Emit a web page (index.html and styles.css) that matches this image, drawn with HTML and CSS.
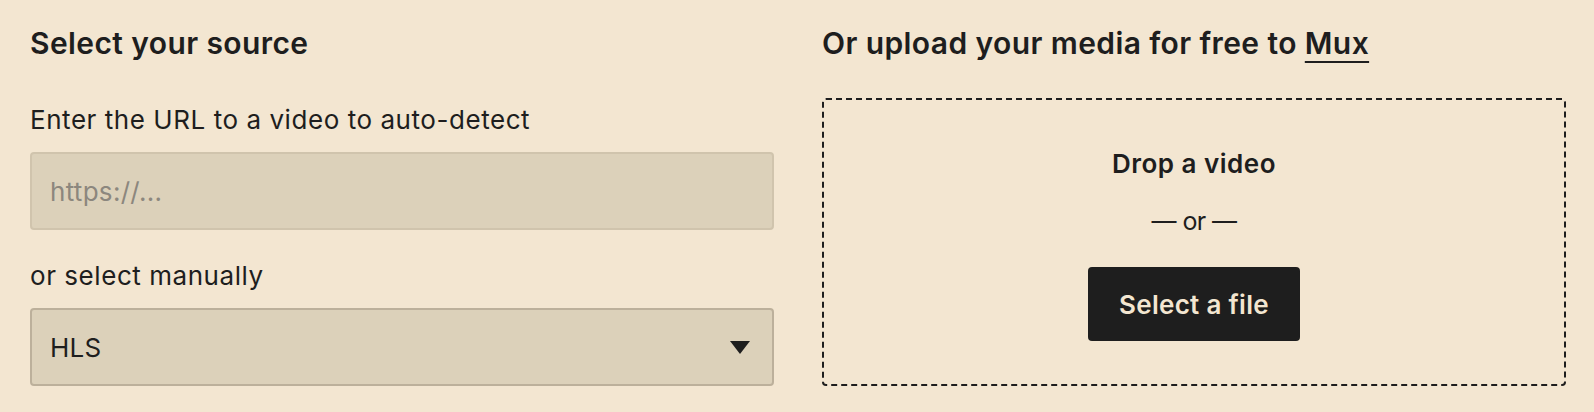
FILE: index.html
```html
<!DOCTYPE html>
<html>
<head>
  <meta charset="UTF-8">
  <title>Select your source</title>
  <link rel="stylesheet" href="styles.css">
</head>
<body>
  <div class="wrap">
    <section class="col">
      <h2>Select your source</h2>
      <label class="lbl lbl-url" for="url">Enter the URL to a video to auto-detect</label>
      <input class="field" id="url" type="text" placeholder="https://...">
      <label class="lbl lbl-sel" for="type">or select manually</label>
      <div class="sel">
        <select class="field" id="type">
          <option>HLS</option>
          <option>DASH</option>
          <option>MP4</option>
        </select>
        <svg class="caret" width="20" height="13" viewBox="0 0 20 13"><path d="M0 0h20L10 13z" fill="#1e1e1e"/></svg>
      </div>
    </section>
    <section class="col">
      <h2>Or upload your media for free to <a href="#">Mux</a></h2>
      <div class="drop">
        <div class="drop-title">Drop a video</div>
        <div class="drop-or">— or —</div>
        <button class="btn">Select a file</button>
      </div>
    </section>
  </div>
</body>
</html>
```

FILE: styles.css
```css
body {margin:0;background:#f3e6d1;color:#1e1e1e;font-family:Inter,"Noto Sans",sans-serif;}
.wrap {display:grid;grid-template-columns:1fr 1fr;gap:48px;padding:26px 28px 0 30px;}
.col {display:flex;flex-direction:column;}
h2 {margin:0;font-size:30px;line-height:34px;font-weight:600;letter-spacing:0.4px;}
h2 a {color:inherit;text-decoration:underline;text-decoration-thickness:2px;text-underline-offset:7px;}
.lbl {font-size:26px;line-height:31px;letter-spacing:0.55px;}
.lbl-url {margin-top:44px;}
.lbl-sel {margin-top:30px;}
.field {display:block;box-sizing:border-box;width:100%;height:78px;margin-top:17px;padding:0 18px;
  background:#dcd1ba;border:2px solid #d0c4ad;border-radius:4px;font:inherit;font-size:26px;letter-spacing:0.3px;color:#1e1e1e;outline:none;}
.field::placeholder {color:#8c877e;}
.sel {position:relative;}
.sel .field {appearance:none;-webkit-appearance:none;border-color:#bcb09b;}
.caret {position:absolute;right:24px;top:50px;}
.drop {margin-top:38px;height:288px;box-sizing:border-box;border:2px dashed #1e1e1e;border-radius:4px;
  display:flex;flex-direction:column;align-items:center;padding-top:48px;}
.drop-title {font-size:26px;line-height:31px;font-weight:600;letter-spacing:0.5px;}
.drop-or {font-size:25px;line-height:31px;margin-top:27px;letter-spacing:-0.6px;}
.btn {margin-top:30px;height:74px;padding:0 31px;background:#1e1e1e;color:#f3e6d1;border:0;border-radius:4px;
  font:inherit;font-size:26px;font-weight:600;letter-spacing:0.3px;cursor:pointer;}
```
